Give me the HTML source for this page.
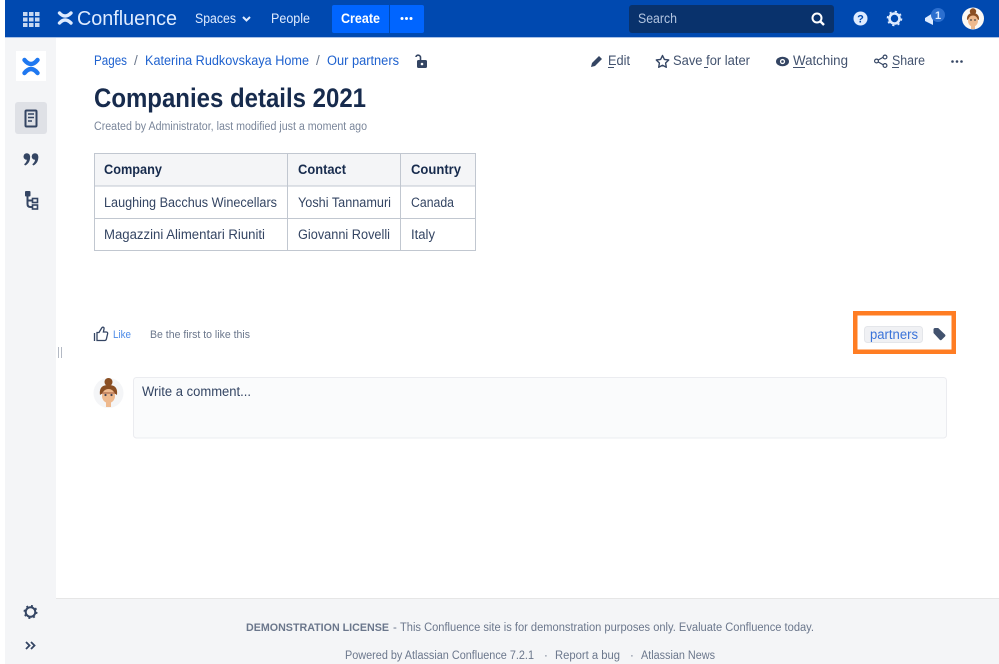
<!DOCTYPE html>
<html><head><meta charset="utf-8"><style>
html,body{margin:0;padding:0;background:#fff;width:999px;height:664px;overflow:hidden}
svg{display:block;position:absolute;left:0;top:0}
text{font-family:"Liberation Sans",sans-serif;font-size:13.5px;fill:#42526e}
.l{fill:#1f62cf}
.n{fill:#deebff}
.f{fill:#6b778c;font-size:11.5px}
.t{fill:#344563}
</style></head><body>
<svg width="999" height="664" viewBox="0 0 999 664" xmlns="http://www.w3.org/2000/svg">
<rect x="5" y="0" width="994" height="37" fill="#0049b0"/>
<rect x="5" y="37" width="994" height="1" fill="#a9c1e6"/>
<rect x="5" y="38" width="51" height="626" fill="#f4f5f7"/>
<rect x="56" y="598" width="943" height="66" fill="#f4f5f7"/>
<rect x="56" y="598" width="943" height="1" fill="#e6e6e6"/>

<!-- app grid -->
<g fill="#c8d8f0">
<rect x="23" y="12" width="4.500" height="4"/><rect x="29" y="12" width="4.500" height="4"/><rect x="35" y="12" width="4.500" height="4"/>
<rect x="23" y="17.500" width="4.500" height="4"/><rect x="29" y="17.500" width="4.500" height="4"/><rect x="35" y="17.500" width="4.500" height="4"/>
<rect x="23" y="23" width="4.500" height="4"/><rect x="29" y="23" width="4.500" height="4"/><rect x="35" y="23" width="4.500" height="4"/>
</g>
<!-- confluence logo header -->
<g fill="none" stroke="#deebff" stroke-width="3.400" stroke-linecap="round">
<path d="M59.500 13Q65 19 71 13"/>
<path d="M59.500 23Q65 17 71 23"/>
</g>
<text x="77" y="25" textLength="100" lengthAdjust="spacingAndGlyphs" style="font-size:20px" class="n">Confluence</text>
<text x="195" y="23" textLength="41" lengthAdjust="spacingAndGlyphs" class="n">Spaces</text>
<path d="M243 17l3.500 3.500 3.500-3.500" fill="none" stroke="#deebff" stroke-width="2"/>
<text x="271" y="23" textLength="39" lengthAdjust="spacingAndGlyphs" class="n">People</text>
<rect x="332" y="5" width="92" height="28" rx="2" fill="#0065ff"/>
<rect x="389" y="5" width="1" height="28" fill="#0049b0"/>
<text x="341" y="23" textLength="39" lengthAdjust="spacingAndGlyphs" style="font-weight:bold;fill:#fff">Create</text>
<g fill="#fff"><circle cx="402" cy="18.500" r="1.500"/><circle cx="406.500" cy="18.500" r="1.500"/><circle cx="411" cy="18.500" r="1.500"/></g>

<!-- search -->
<rect x="629" y="5" width="205" height="28" rx="3" fill="#09326c"/>
<text x="638" y="23" textLength="39" lengthAdjust="spacingAndGlyphs" style="fill:#b3c5e0">Search</text>
<circle cx="817" cy="18" r="4.500" fill="none" stroke="#fff" stroke-width="2"/>
<path d="M820.500 21.500l3.500 3.500" stroke="#fff" stroke-width="2.400"/>
<!-- help -->
<circle cx="860.500" cy="18.500" r="7" fill="#deebff"/>
<text x="860.500" y="22.500" text-anchor="middle" style="font-size:11px;font-weight:bold;fill:#0049b0">?</text>
<!-- cog -->
<circle cx="894.500" cy="18.500" r="5" fill="none" stroke="#deebff" stroke-width="2.600"/>
<circle cx="894.500" cy="18.500" r="7" fill="none" stroke="#deebff" stroke-width="1.600" stroke-dasharray="2.200 3.300"/>
<!-- notifications -->
<path d="M925 18l8-5v12l-8-4z" fill="#deebff"/>
<circle cx="938" cy="15" r="7" fill="#2c6fcf"/>
<text x="938" y="19" text-anchor="middle" style="font-size:11px;font-weight:bold;fill:#deebff">1</text>
<!-- avatar -->
<circle cx="973" cy="18.500" r="11" fill="#fbf8f4"/>
<circle cx="973" cy="11.500" r="3.200" fill="#8a4f24"/>
<path d="M967 20c-.5-5 2.500-7 6-7s6.500 2 6 7c-3-2-9-2-12 0z" fill="#8a4f24"/>
<ellipse cx="973" cy="21" rx="5" ry="5.500" fill="#eeb98e"/>
<rect x="971" y="25" width="4" height="4" fill="#eeb98e"/>
<circle cx="971" cy="20" r=".900" fill="#444"/><circle cx="975" cy="20" r=".900" fill="#444"/>

<!-- sidebar -->
<rect x="16" y="51" width="30" height="30" fill="#fff"/>
<g fill="none" stroke="#1f78f0" stroke-width="4.400" stroke-linecap="round">
<path d="M24.500 60Q31 68 37.500 60"/>
<path d="M24.500 73Q31 65 37.500 73"/>
</g>
<rect x="15" y="102" width="32" height="32" rx="3" fill="#dfe1e6"/>
<rect x="25.500" y="110.500" width="11" height="16" rx="1" fill="none" stroke="#344563" stroke-width="2"/>
<path d="M28 114h6M28 117.500h6M28 121h4" stroke="#344563" stroke-width="1.500"/>
<!-- quote marks -->
<g fill="#344563">
<circle cx="26.800" cy="156.500" r="3.300"/><path d="M30.100 156.500c.2 4-1.500 7.500-5 9l-1-1.200c2-1.500 2.800-3.300 2.800-5z"/>
<circle cx="35" cy="156.500" r="3.300"/><path d="M38.300 156.500c.2 4-1.500 7.500-5 9l-1-1.200c2-1.500 2.800-3.300 2.800-5z"/>
</g>
<rect x="25" y="191" width="5.500" height="5.500" rx="1" fill="#344563"/>
<path d="M27.500 195v9c0 2 1 3 3 3h2M27.500 200.500h5" fill="none" stroke="#344563" stroke-width="2"/>
<rect x="32.500" y="198.500" width="5" height="4" fill="none" stroke="#344563" stroke-width="1.600"/>
<rect x="32.500" y="205" width="5" height="4" fill="none" stroke="#344563" stroke-width="1.600"/>
<circle cx="30.500" cy="612" r="4.800" fill="none" stroke="#344563" stroke-width="2"/>
<circle cx="30.500" cy="612" r="6.300" fill="none" stroke="#344563" stroke-width="1.400" stroke-dasharray="2 3"/>
<path d="M26 642l3.500 3.500-3.500 3.500M31 642l3.500 3.500-3.500 3.500" fill="none" stroke="#344563" stroke-width="1.800"/>
<path d="M58.500 347v11M61.500 347v11" stroke="#b3b9c4" stroke-width="1"/>

<!-- breadcrumbs -->
<text x="94" y="65" textLength="33" lengthAdjust="spacingAndGlyphs" class="l">Pages</text>
<text x="134" y="65" style="fill:#6b778c">/</text>
<text x="145" y="65" textLength="164" lengthAdjust="spacingAndGlyphs" class="l">Katerina Rudkovskaya Home</text>
<text x="316" y="65" style="fill:#6b778c">/</text>
<text x="327" y="65" textLength="72" lengthAdjust="spacingAndGlyphs" class="l">Our partners</text>
<rect x="417" y="60" width="10" height="8" rx="1.500" fill="#344563"/>
<circle cx="422" cy="64" r="1.300" fill="#fff"/>
<path d="M416 57c0-2.500 4.500-2.500 4.500.5v3" fill="none" stroke="#344563" stroke-width="1.600"/>

<!-- actions -->
<path d="M591 67l1-4 7-7 3 3-7 7z" fill="#344563"/>
<text x="608" y="65" textLength="22" lengthAdjust="spacingAndGlyphs">Edit</text>
<rect x="608" y="67" width="6" height="1" fill="#42526e"/>
<path d="M662.500 55.500l1.900 3.900 4.300.6-3.100 3 .7 4.300-3.800-2-3.800 2 .7-4.300-3.100-3 4.300-.6z" fill="none" stroke="#344563" stroke-width="1.400" stroke-linejoin="round"/>
<text x="673" y="65" textLength="77" lengthAdjust="spacingAndGlyphs">Save for later</text>
<rect x="704" y="67" width="4" height="1" fill="#42526e"/>
<ellipse cx="782.500" cy="61.500" rx="6.500" ry="4.800" fill="#344563"/>
<circle cx="782.500" cy="61.500" r="2.600" fill="#fff"/><circle cx="782.500" cy="61.500" r="1.300" fill="#344563"/>
<text x="793" y="65" textLength="55" lengthAdjust="spacingAndGlyphs">Watching</text>
<rect x="793" y="67" width="12" height="1" fill="#42526e"/>
<path d="M884.500 56.500l-8 4.500 8 4.500" fill="none" stroke="#344563" stroke-width="1.200"/>
<circle cx="885" cy="57" r="1.900" fill="#fff" stroke="#344563" stroke-width="1.200"/>
<circle cx="876.500" cy="61" r="1.900" fill="#fff" stroke="#344563" stroke-width="1.200"/>
<circle cx="885" cy="65.500" r="1.900" fill="#fff" stroke="#344563" stroke-width="1.200"/>
<text x="892" y="65" textLength="33" lengthAdjust="spacingAndGlyphs">Share</text>
<rect x="892" y="67" width="7" height="1" fill="#42526e"/>
<g fill="#344563"><circle cx="952.500" cy="61.500" r="1.300"/><circle cx="957" cy="61.500" r="1.300"/><circle cx="961.500" cy="61.500" r="1.300"/></g>

<!-- title -->
<text x="94" y="107" textLength="272" lengthAdjust="spacingAndGlyphs" style="font-size:27px;font-weight:bold;fill:#172b4d">Companies details 2021</text>
<text x="94" y="130" textLength="273" lengthAdjust="spacingAndGlyphs" style="font-size:11.5px;fill:#7a869a">Created by Administrator, last modified just a moment ago</text>

<!-- table -->
<rect x="94.500" y="153.500" width="381" height="97" fill="#fff"/>
<rect x="94.500" y="153.500" width="381" height="32.500" fill="#f4f5f7"/>
<g fill="none" stroke="#c1c7d0" stroke-width="1">
<rect x="94.500" y="153.500" width="381" height="97"/>
<path d="M94.500 186h381M94.500 218.500h381M287.500 153.500v97M400.500 153.500v97"/>
</g>
<text x="104" y="174" textLength="58" lengthAdjust="spacingAndGlyphs" style="font-weight:bold;fill:#172b4d">Company</text>
<text x="298" y="174" textLength="48" lengthAdjust="spacingAndGlyphs" style="font-weight:bold;fill:#172b4d">Contact</text>
<text x="411" y="174" textLength="50" lengthAdjust="spacingAndGlyphs" style="font-weight:bold;fill:#172b4d">Country</text>
<text x="104" y="207" textLength="173" lengthAdjust="spacingAndGlyphs" class="t">Laughing Bacchus Winecellars</text>
<text x="298" y="207" textLength="93" lengthAdjust="spacingAndGlyphs" class="t">Yoshi Tannamuri</text>
<text x="411" y="207" textLength="43" lengthAdjust="spacingAndGlyphs" class="t">Canada</text>
<text x="104" y="239" textLength="161" lengthAdjust="spacingAndGlyphs" class="t">Magazzini Alimentari Riuniti</text>
<text x="298" y="239" textLength="92" lengthAdjust="spacingAndGlyphs" class="t">Giovanni Rovelli</text>
<text x="411" y="239" textLength="24" lengthAdjust="spacingAndGlyphs" class="t">Italy</text>

<!-- like -->
<path d="M94.500 333v8M97 332.500h2l2.700-4.500c.9-1.400 2.700-.9 2.300 1l-.6 3h2.900c1.100 0 1.600.9 1.300 1.900l-1.200 5.100c-.2.800-.7 1.500-1.600 1.500H97z" fill="none" stroke="#344563" stroke-width="1.300"/>
<text x="113" y="338" textLength="18" lengthAdjust="spacingAndGlyphs" style="font-size:11px;fill:#4c8be8">Like</text>
<text x="150" y="338" textLength="100" lengthAdjust="spacingAndGlyphs" style="font-size:11px;fill:#6b778c">Be the first to like this</text>

<!-- labels -->
<rect x="855.250" y="313.250" width="98.500" height="38.500" fill="none" stroke="#ff7d23" stroke-width="4.500"/>
<rect x="864.500" y="326.500" width="58" height="16" rx="3" fill="#f0f1f4" stroke="#e4e6ea"/>
<text x="870" y="339" textLength="48" lengthAdjust="spacingAndGlyphs" style="fill:#3a73d9">partners</text>
<path d="M933.500 329.500c0-.8.600-1.500 1.500-1.500h3.200l6.800 6.500c.6.600.6 1.300 0 2l-3.300 3.300c-.6.600-1.400.6-2 0l-6.200-6.800z" fill="#42526e"/>

<!-- comment -->
<circle cx="108.500" cy="393" r="15" fill="#f4f5f7"/>
<circle cx="108.500" cy="382" r="4" fill="#8a4f24"/>
<path d="M100 395c-1-8 3-10 8.500-10s9.500 2 8.500 10c-3-3-14-3-17 0z" fill="#8a4f24"/>
<ellipse cx="108.500" cy="396" rx="6.500" ry="7" fill="#eeb98e"/>
<rect x="106" y="402" width="5" height="5" fill="#eeb98e"/>
<path d="M102 393h13" stroke="#b06a4a" stroke-width="1.200"/>
<circle cx="105.500" cy="395" r="1.100" fill="#445"/><circle cx="111.500" cy="395" r="1.100" fill="#445"/>
<rect x="133.500" y="377.500" width="813" height="60.500" rx="3" fill="#fafbfc" stroke="#ebecf0"/>
<text x="142" y="396" textLength="109" lengthAdjust="spacingAndGlyphs" class="t">Write a comment...</text>

<!-- footer -->
<text x="246" y="631" textLength="143" lengthAdjust="spacingAndGlyphs" style="font-size:11px;font-weight:bold;fill:#6b778c">DEMONSTRATION LICENSE</text>
<text x="393" y="631" class="f">-</text>
<text x="400" y="631" textLength="414" lengthAdjust="spacingAndGlyphs" class="f">This Confluence site is for demonstration purposes only. Evaluate Confluence today.</text>
<text x="345" y="659" textLength="189" lengthAdjust="spacingAndGlyphs" class="f">Powered by Atlassian Confluence 7.2.1</text>
<text x="544" y="659" class="f">·</text>
<text x="555" y="659" textLength="65" lengthAdjust="spacingAndGlyphs" class="f">Report a bug</text>
<text x="630" y="659" class="f">·</text>
<text x="641" y="659" textLength="74" lengthAdjust="spacingAndGlyphs" class="f">Atlassian News</text>
</svg>
</body></html>
